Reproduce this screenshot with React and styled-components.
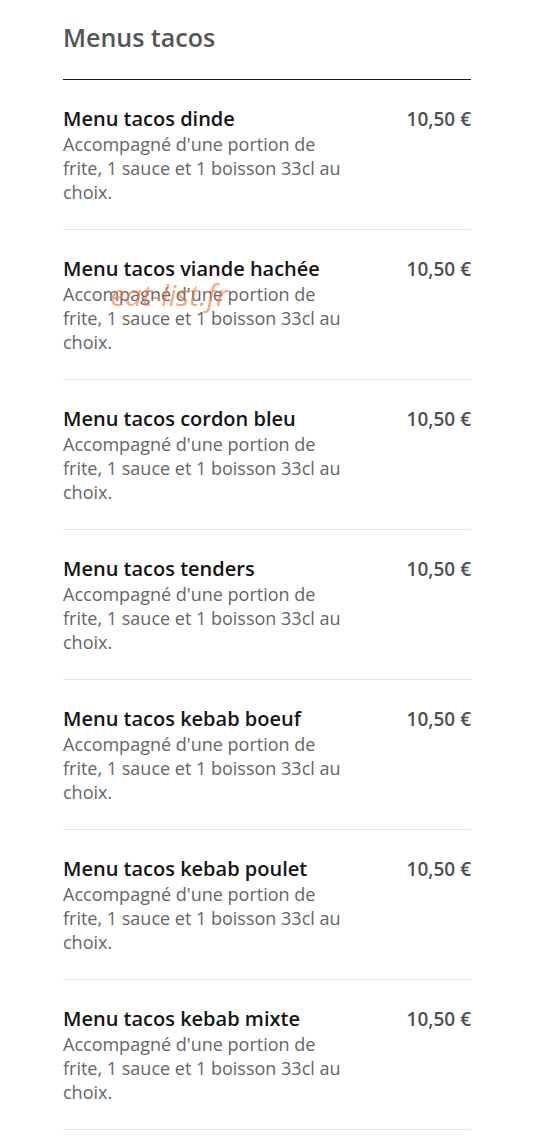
import React from 'react';
import styled, { createGlobalStyle } from 'styled-components';

const GlobalStyle = createGlobalStyle`
  html, body {
    margin: 0;
    padding: 0;
    background: #ffffff;
  }
  body {
    font-family: "Open Sans", "Noto Sans", sans-serif;
  }
`;

const Section = styled.section`
  width: 408px;
  padding: 21px 0 0 63px;
`;

const Title = styled.h2`
  margin: 0 0 26px;
  font-size: 25px;
  line-height: 32px;
  font-weight: 600;
  color: #555555;
`;

const List = styled.ul`
  list-style: none;
  margin: 0;
  padding: 0;
  border-top: 1px solid #1a1a1a;
`;

const Item = styled.li`
  position: relative;
  display: flex;
  justify-content: space-between;
  align-items: flex-start;
  padding: 27px 0 25px;
  border-bottom: 1px solid #e6e6e6;
`;

const Info = styled.div`
  max-width: 278px;
`;

const Name = styled.h3`
  margin: 0 0 1px;
  font-size: 20px;
  line-height: 24px;
  font-weight: 600;
  color: #151515;
`;

const Desc = styled.p`
  margin: 0;
  font-size: 18px;
  line-height: 24px;
  color: #666666;
`;

const Price = styled.span`
  font-size: 19px;
  line-height: 24px;
  font-weight: 600;
  color: #505050;
  white-space: nowrap;
`;

const Watermark = styled.span`
  position: absolute;
  left: 47px;
  top: 49px;
  font-size: 30px;
  font-style: italic;
  line-height: 32px;
  color: rgba(240, 120, 60, 0.65);
  pointer-events: none;
`;

const items = [
  'Menu tacos dinde',
  'Menu tacos viande hachée',
  'Menu tacos cordon bleu',
  'Menu tacos tenders',
  'Menu tacos kebab boeuf',
  'Menu tacos kebab poulet',
  'Menu tacos kebab mixte',
];

const App = () => {
  return (
    <>
      <GlobalStyle />
      <Section>
        <Title>Menus tacos</Title>
        <List>
          {items.map((name, i) => (
            <Item key={name}>
              <Info>
                <Name>{name}</Name>
                <Desc>
                  Accompagné d'une portion de frite, 1 sauce et 1 boisson 33cl au choix.
                </Desc>
              </Info>
              <Price>10,50 €</Price>
              {i === 1 && <Watermark>eat-list.fr</Watermark>}
            </Item>
          ))}
        </List>
      </Section>
    </>
  );
};

export default App;
